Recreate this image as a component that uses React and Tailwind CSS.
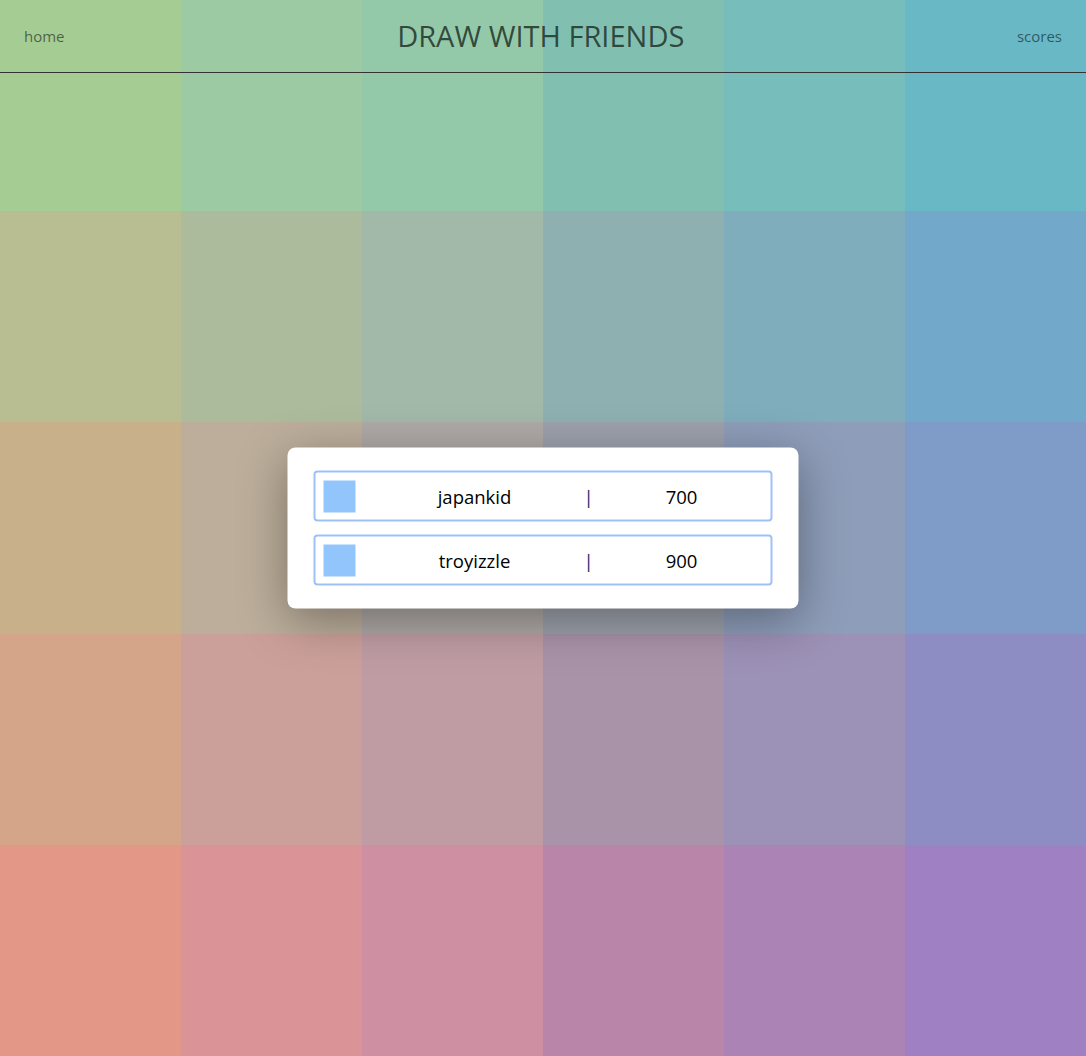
const colors = [
  ['#a5cc93', '#9ccaa2', '#93c9a9', '#81bfb0', '#76bdbb', '#68b8c6'],
  ['#b8be91', '#adbb9d', '#a2b8a9', '#8eb0b0', '#7fadbc', '#72a8c9'],
  ['#c8b08a', '#bcae9b', '#afa9a7', '#9ca1ac', '#8e9db9', '#7f9bc7'],
  ['#d5a58a', '#cca09a', '#bf9ca4', '#a993a9', '#9c91b6', '#8d8dc4'],
  ['#e39786', '#da9396', '#cf8fa3', '#b985a9', '#ab84b5', '#9e80c3'],
];

const scores = [
  { name: 'japankid', score: 700 },
  { name: 'troyizzle', score: 900 },
];

export default function App() {
  return (
    <div className="relative h-[1056px] w-full overflow-hidden font-['Open_Sans',sans-serif]">
      <div className="grid h-full grid-cols-6 grid-rows-5">
        {colors.flat().map((c, i) => (
          <div key={i} style={{ backgroundColor: c }} />
        ))}
      </div>

      <header className="absolute inset-x-0 top-0 flex h-[73px] items-center justify-between border-b border-[#333] px-6">
        <a className="text-[15px] text-black/55">home</a>
        <h1 className="text-[29px] font-normal text-[#1f3328]/85">DRAW WITH FRIENDS</h1>
        <a className="text-[15px] text-black/55">scores</a>
      </header>

      <div className="absolute left-1/2 top-1/2 w-[511px] -translate-x-1/2 -translate-y-1/2 rounded-lg bg-white px-[26px] py-[23px] shadow-[0_12px_48px_rgba(0,0,0,0.35)]">
        <div className="flex flex-col gap-[13px]">
          {scores.map((s) => (
            <div
              key={s.name}
              className="flex h-[51px] items-center rounded border-2 border-[#9ec2f8] px-2 text-[18.5px] text-black"
            >
              <div className="h-8 w-8 shrink-0 bg-[#93c5fd]" />
              <span className="ml-6 w-[190px] text-center">{s.name}</span>
              <span className="w-[38px] text-center text-[#1e2a6e]">|</span>
              <span className="w-[148px] text-center">{s.score}</span>
            </div>
          ))}
        </div>
      </div>
    </div>
  );
}
